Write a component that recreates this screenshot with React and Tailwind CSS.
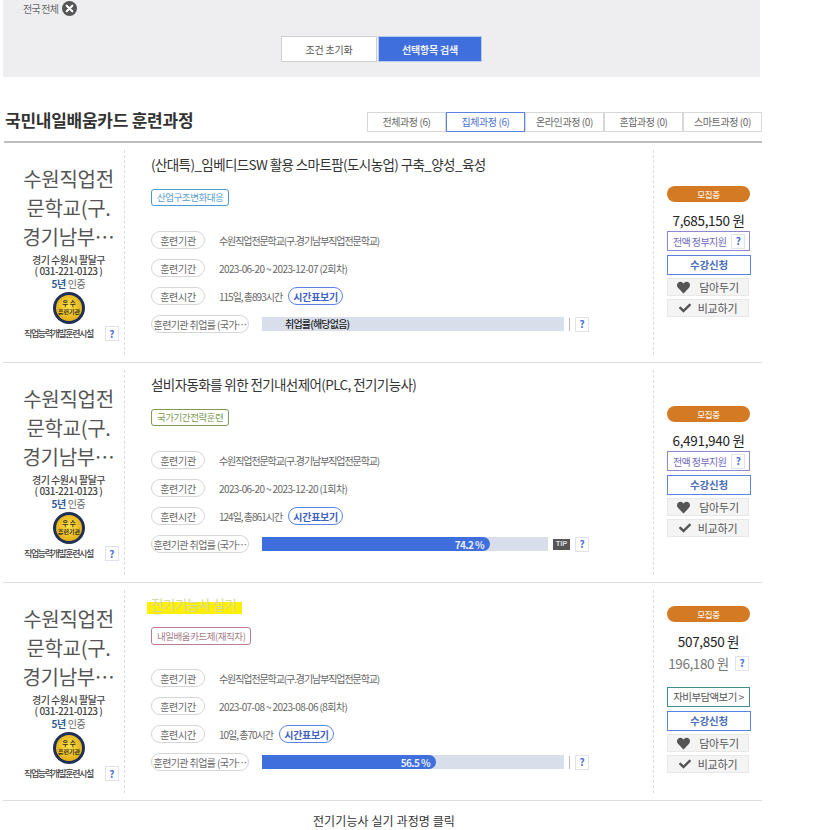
import React from "react";
import { FaHeart, FaCheck } from "react-icons/fa";

const font = { fontFamily: '"Noto Sans CJK KR","Noto Sans",sans-serif' };

function Help({ className = "" }) {
  return (
    <span className={"flex h-[15px] w-[14px] shrink-0 items-center justify-center border border-[#dfe3ea] bg-white text-[10px] leading-none font-bold text-[#4a6fd8] " + className}>?</span>
  );
}

function Pill({ children, wide }) {
  return (
    <span className={"flex h-[18px] shrink-0 items-center justify-center rounded-full border border-[#d6d6d6] bg-white text-[10px] whitespace-nowrap text-[#666] " + (wide ? "w-[98px] tracking-[-0.6px]" : "w-[54px] tracking-[-0.3px]")}>{children}</span>
  );
}

function Row({ label, tight, children }) {
  return (
    <div className="flex h-[18px] items-center">
      <Pill>{label}</Pill>
      <span className={"ml-[14px] flex items-center text-[10px] whitespace-nowrap text-[#666] " + (tight ? "tracking-[-1.1px]" : "tracking-[-0.6px]")}>{children}</span>
    </div>
  );
}

function Seal() {
  return (
    <svg width="32" height="32" viewBox="0 0 32 32" className="block">
      <defs>
        <radialGradient id="sealGold" cx="50%" cy="45%" r="60%">
          <stop offset="0%" stopColor="#ffe14a" />
          <stop offset="100%" stopColor="#e0aa14" />
        </radialGradient>
      </defs>
      <circle cx="16" cy="16" r="16" fill="#1f2f55" />
      <circle cx="16" cy="16" r="13" fill="url(#sealGold)" />
      <text x="16" y="13.5" textAnchor="middle" fontSize="6.5" fontWeight="700" fill="#3a3420" style={font}>우 수</text>
      <text x="16" y="22" textAnchor="middle" fontSize="6" fontWeight="700" fill="#3a3420" style={font}>훈련기관</text>
    </svg>
  );
}

function Left() {
  return (
    <div className="flex w-[120px] shrink-0 flex-col items-center border-r border-dashed border-[#dcdcdc] pl-[8px]">
      <div className="mt-[14px] text-center text-[20px] leading-[29px] tracking-[-0.3px] text-[#555]">
        수원직업전<br />문학교(구.<br />경기남부…
      </div>
      <div className="mt-[3px] text-center text-[10px] leading-[11px] font-medium tracking-[-0.5px] text-[#444]">
        경기 수원시 팔달구<br />( 031-221-0123 )
      </div>
      <div className="mt-[2px] text-[10px] leading-[12px] tracking-[-0.4px] text-[#666]"><b className="font-bold text-[#2d5a94]">5년</b> 인증</div>
      <div className="mt-[2px]"><Seal /></div>
      <div className="mt-[2px] flex w-full items-center pl-[11px]">
        <span className="text-[9px] font-medium tracking-[-1.4px] whitespace-nowrap text-[#444]">직업능력개발훈련시설</span>
        <Help className="ml-[12px]" />
      </div>
    </div>
  );
}

function Bar({ percent, label, tip, emptyLabel }) {
  return (
    <div className="ml-[13px] flex flex-1 items-center">
      <div className={"relative h-[14px] bg-[#d8deea] " + (tip ? "w-[286px]" : "w-[302px]")}>
        {percent != null && (
          <div className="flex h-full items-center justify-end rounded-r-[7px] bg-[#3f6fdc] pr-[6px] text-[10px] font-bold tracking-[-0.6px] text-[#e8eefc]" style={{ width: percent }}>{label}</div>
        )}
        {emptyLabel && <span className="absolute top-0 left-[23px] text-[10px] leading-[14px] font-medium tracking-[-0.8px] text-[#222]">{emptyLabel}</span>}
      </div>
      {tip ? (
        <span className="ml-[5px] flex h-[11px] w-[17px] items-center justify-center bg-[#555] text-[7.5px] leading-none font-bold text-[#ddd]" style={{ fontFamily: '"Liberation Sans",sans-serif' }}>TIP</span>
      ) : (
        <span className="ml-[5px] h-[13px] w-[1px] bg-[#bbb]" />
      )}
      <Help className="ml-[5px]" />
    </div>
  );
}

function Action({ icon, children, gap }) {
  return (
    <div className="flex h-[18px] w-[82px] items-center justify-center border border-[#e8e8e8] bg-[#f4f4f5] text-[11px] tracking-[-0.2px] text-[#555]">
      <span className={"text-[#555] " + gap}>{icon}</span>
      {children}
    </div>
  );
}

function Right({ price, sub, support }) {
  return (
    <div className="ml-[13px] flex w-[84px] shrink-0 flex-col items-start">
      <div className={"flex h-[16px] w-[83px] items-center justify-center rounded-full bg-[#d47a25] text-[8.5px] font-medium tracking-[-0.4px] text-[#fbeedd] " + (sub ? "mt-[16px]" : "mt-[36px]")}>모집중</div>
      <div className={"w-[83px] text-center text-[13.5px] leading-[20px] tracking-[-0.3px] whitespace-nowrap text-[#222] " + (sub ? "mt-[9px]" : "mt-[8px]")}>{price}</div>
      {sub ? (
        <>
          <div className="mt-[2px] flex h-[20px] w-[83px] items-center justify-center text-[13.5px] tracking-[-0.4px] whitespace-nowrap text-[#777]">
            {sub}<Help className="ml-[6px]" />
          </div>
          <div className="mt-[14px] flex h-[20px] w-[83px] items-center justify-center border border-[#3d8f8a] bg-white text-[10.5px] tracking-[-0.6px] whitespace-nowrap text-[#555]">자비부담액보기 &gt;</div>
        </>
      ) : (
        <div className="mt-[1px] flex h-[20px] w-[83px] items-center justify-between border border-[#8c88d4] pr-[4px] pl-[5px] text-[10px] tracking-[-0.6px] whitespace-nowrap text-[#6f6bbb]">
          {support}<Help />
        </div>
      )}
      <div className="mt-[4px] flex h-[20px] w-[84px] items-center justify-center border border-[#5b83e6] bg-white text-[10.5px] font-bold tracking-[-0.2px] text-[#4a6fb8]">수강신청</div>
      <div className="mt-[3px]"><Action gap="mr-[9px]" icon={<FaHeart size={13} />}>담아두기</Action></div>
      <div className="mt-[3px]"><Action gap="mr-[7px]" icon={<FaCheck size={12} />}>비교하기</Action></div>
    </div>
  );
}

function Card({ title, highlight, badge, badgeClass, period, hours, bar, price, sub, offsets, heightClass }) {
  return (
    <div className={"flex w-[759px] border-b border-[#dedede] py-[7px] pl-[2px] " + heightClass}>
      <Left />
      <div className="ml-[26px] flex w-[503px] shrink-0 flex-col border-r border-dashed border-[#dcdcdc]">
        <div className={"relative flex h-[18px] items-center text-[13.5px] tracking-[-0.6px] " + offsets[0] + (highlight ? " text-[#d8d8a2]" : " text-[#333]")}>
          {highlight && <span className="absolute top-[7px] -left-[4px] h-[12px] w-[95px] bg-[#fdf000]" />}
          <span className="relative">{title}</span>
        </div>
        <span className={"flex items-center self-start rounded-[3px] border bg-white px-[5px] text-[9.5px] tracking-[-0.45px] " + offsets[1] + " " + badgeClass}>{badge}</span>
        <div className={"flex flex-col gap-[10px] " + offsets[2]}>
          <Row label="훈련기관" tight>수원직업전문학교(구.경기남부직업전문학교)</Row>
          <Row label="훈련기간">{period}</Row>
          <Row label="훈련시간">
            <span className="tracking-[-1px]">{hours}</span>
            <span className="ml-[6px] flex h-[18px] w-[55px] items-center justify-center rounded-full border border-[#5b83e6] bg-white text-[10px] font-bold tracking-[-0.3px] text-[#3f62c4]">시간표보기</span>
          </Row>
          <div className="flex h-[18px] items-center">
            <Pill wide>훈련기관 취업률 (국가…</Pill>
            <Bar {...bar} />
          </div>
        </div>
      </div>
      <Right price={price} sub={sub} support="전액 정부지원" />
    </div>
  );
}

export default function App() {
  return (
    <div className="h-[830px] w-[818px] overflow-hidden bg-white" style={font}>
      <div className="ml-[3px] h-[77px] w-[757px] bg-[#eeeef0]">
        <div className="flex h-[16px] items-center pl-[20px]">
          <span className="text-[10px] tracking-[-0.8px] text-[#666]">전국 전체</span>
          <svg width="15" height="15" viewBox="0 0 16 16" className="ml-[4px]">
            <circle cx="8" cy="8" r="8" fill="#555" />
            <path d="M5 5l6 6M11 5l-6 6" stroke="#fff" strokeWidth="2.2" strokeLinecap="round" />
          </svg>
        </div>
        <div className="mt-[20px] flex justify-center">
          <div className="flex gap-[1px]">
            <span className="flex h-[26px] w-[96px] items-center justify-center border border-[#cfcfcf] bg-white text-[10px] tracking-[-0.2px] text-[#555]">조건 초기화</span>
            <span className="flex h-[26px] w-[104px] items-center justify-center border border-[#b9c8ef] bg-[#3f6fdc] text-[10px] font-bold tracking-[-0.2px] text-[#eef2fd]">선택항목 검색</span>
          </div>
        </div>
      </div>

      <div className="ml-[5px] mt-[35px] flex h-[20px] w-[757px] items-center justify-between">
        <h2 className="pb-[5px] text-[17px] font-bold tracking-[-0.25px] text-[#333]">국민내일배움카드 훈련과정</h2>
        <div className="flex h-[20px]">
          {["전체과정 (6)", "집체과정 (6)", "온라인과정 (0)", "혼합과정 (0)", "스마트과정 (0)"].map((t, i) => (
            <span key={t} className={"flex h-[20px] w-[79px] items-center justify-center border pb-[1px] text-[10px] tracking-[-0.4px] " + (i === 1 ? "border-[#5b83e6] text-[#4a6fd0]" : "border-[#d8d8d8] text-[#666]")}>{t}</span>
          ))}
        </div>
      </div>

      <div className="ml-[4px] mt-[9px] h-[2px] w-[758px] bg-[#bdbdbd]" />

      <div className="ml-[3px] w-[759px]">
        <Card
          heightClass="h-[220px]"
          title="(산대특)_임베디드SW 활용 스마트팜(도시농업) 구축_양성_육성"
          badge="산업구조변화대응"
          badgeClass="h-[17px] border-[#4a9bd1] text-[#5aa0d0]"
          period="2023-06-20 ~ 2023-12-07 (2회차)"
          hours="115일, 총893시간"
          bar={{ emptyLabel: "취업률(해당없음)" }}
          price="7,685,150 원"
          offsets={["mt-[5px]", "mt-[16px]", "mt-[25px]"]}
        />
        <Card
          heightClass="h-[220px]"
          title="설비자동화를 위한 전기내선제어(PLC, 전기기능사)"
          badge="국가기간전략훈련"
          badgeClass="h-[17px] border-[#7c9a55] text-[#7c9a55]"
          period="2023-06-20 ~ 2023-12-20 (1회차)"
          hours="124일, 총861시간"
          bar={{ percent: 228, label: "74.2 %", tip: true }}
          price="6,491,940 원"
          offsets={["mt-[5px]", "mt-[16px]", "mt-[25px]"]}
        />
        <Card
          heightClass="h-[218px]"
          title="전기기능사 실기"
          highlight
          badge="내일배움카드제(재직자)"
          badgeClass="h-[18px] border-[#b5808c] text-[#a57c86]"
          period="2023-07-08 ~ 2023-08-06 (8회차)"
          hours="10일, 총70시간"
          bar={{ percent: 174, label: "56.5 %" }}
          price="507,850 원"
          sub="196,180 원"
          offsets={["mt-[5px]", "mt-[14px]", "mt-[24px]"]}
        />
      </div>

      <div className="mt-[11px] w-[768px] text-center text-[12px] tracking-[0.1px] text-[#333]">전기기능사 실기 과정명 클릭</div>
    </div>
  );
}
